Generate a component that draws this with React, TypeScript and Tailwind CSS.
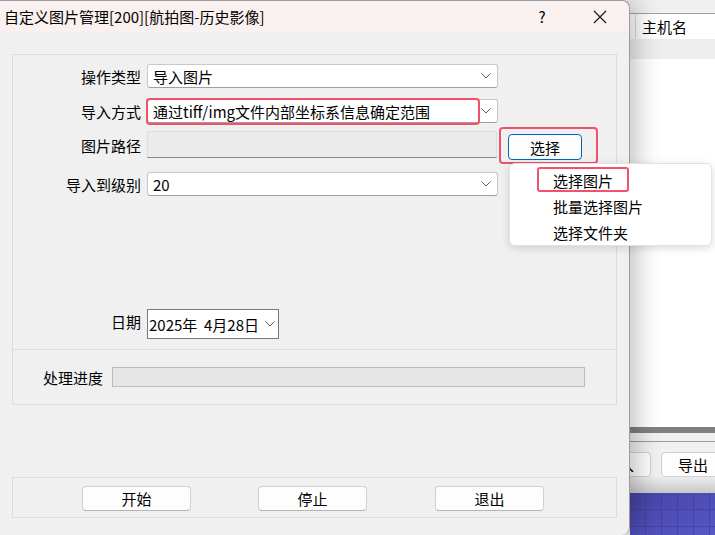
import React from 'react';

// Chevron used by the combo boxes
const Chevron = () => (
  <svg width="10" height="6" viewBox="0 0 10 6" className="shrink-0">
    <path d="M0.5 0.5 L5 5 L9.5 0.5" fill="none" stroke="#606060" strokeWidth="1" />
  </svg>
);

type SelectProps = {
  value: string;
  children?: React.ReactNode;
};

// Windows style combo box
const Select = ({ value, children }: SelectProps) => (
  <div className="relative flex h-[24px] w-[351px] items-center justify-between rounded-[3px] border border-[#c8c8c8] border-b-[#a0a0a0] bg-white pl-[5px] pr-[6px]">
    <span className="leading-none">{value}</span>
    <Chevron />
    {children}
  </div>
);

// Label column of the form
const Label = ({ text, w = 'w-[128px]' }: { text: string; w?: string }) => (
  <div className={`${w} shrink-0 text-right leading-none`}>{text}</div>
);

const Button = ({ text }: { text: string }) => (
  <div className="flex h-[25px] w-[109px] items-center justify-center rounded-[4px] border border-[#d0d0d0] border-b-[#b4b4b4] bg-[#fdfdfd] leading-none">
    {text}
  </div>
);

export default function App() {
  return (
    <div className="relative flex h-[535px] w-[715px] overflow-hidden bg-[#f0f0f0] text-[15px] text-black [font-family:'Noto_Sans_CJK_SC','Noto_Sans',sans-serif]">
      {/* Dialog */}
      <div className="relative z-10 flex h-[535px] w-[630px] shrink-0 flex-col rounded-tr-[8px] rounded-br-[8px] border-r border-t border-[#9c9c9c] bg-[#f0f0f0] shadow-[6px_0_26px_rgba(0,0,0,0.25)]">
        {/* Title bar */}
        <div className="flex h-[31px] items-center justify-between rounded-tr-[8px] bg-[#f8f1ef] pl-[4px] pr-[6px]">
          <span className="leading-none">自定义图片管理[200][航拍图-历史影像]</span>
          <div className="flex items-center">
            <div className="flex w-[46px] justify-center leading-none">?</div>
            <div className="ml-[12px] flex w-[46px] justify-center">
              <svg width="14" height="14" viewBox="0 0 14 14">
                <path d="M1 1 L13 13 M13 1 L1 13" stroke="#1a1a1a" strokeWidth="1.2" />
              </svg>
            </div>
          </div>
        </div>

        {/* Body */}
        <div className="flex flex-1 flex-col px-[12px] pt-[22px]">
          {/* Settings group */}
          <div className="flex flex-col border border-[#dcdcdc] pb-[10px] pt-[9px]">
            <div className="flex items-center gap-[6px]">
              <Label text="操作类型" />
              <Select value="导入图片" />
            </div>

            <div className="mt-[11px] flex items-center gap-[6px]">
              <Label text="导入方式" />
              <Select value="通过tiff/img文件内部坐标系信息确定范围">
                <div className="absolute -left-[2px] -top-[2px] h-[27px] w-[334px] rounded-[4px] border-2 border-[#f0526a]" />
              </Select>
            </div>

            <div className="mt-[8px] flex items-start gap-[6px]">
              <Label text="图片路径" w="w-[128px] mt-[7px]" />
              <div className="h-[27px] w-[350px] border border-[#dedede] border-b-[#858585] bg-[#ebebeb]" />
              <div className="relative ml-[5px] mt-[3px] flex h-[26px] w-[74px] items-center justify-center rounded-[4px] border border-[#0067c0] bg-[#fdfdfd] leading-none">
                选择
                <div className="absolute -left-[10px] -top-[8px] h-[37px] w-[99px] rounded-[4px] border-2 border-[#f0526a]" />
              </div>
            </div>

            <div className="mt-[12px] flex items-center gap-[6px]">
              <Label text="导入到级别" />
              <Select value="20" />
            </div>

            <div className="mt-[113px] flex items-start gap-[6px]">
              <Label text="日期" w="w-[128px] mt-[5px]" />
              <div className="flex h-[30px] w-[132px] items-center justify-between border border-[#7a7a7a] bg-white pl-[1px] pr-[3px]">
                <span className="leading-none">2025年&nbsp;&nbsp;4月28日</span>
                <Chevron />
              </div>
            </div>
          </div>

          {/* Progress group */}
          <div className="flex items-center gap-[9px] border border-t-0 border-[#dcdcdc] py-[17px]">
            <Label text="处理进度" w="w-[90px]" />
            <div className="h-[20px] w-[473px] border border-[#bcbcbc] bg-[#e6e6e6]" />
          </div>

          {/* Action buttons */}
          <div className="mt-[72px] flex border border-[#dcdcdc] pb-[6px] pl-[69px] pt-[8px]">
            <Button text="开始" />
            <div className="ml-[67px]">
              <Button text="停止" />
            </div>
            <div className="ml-[68px]">
              <Button text="退出" />
            </div>
          </div>
        </div>
      </div>

      {/* Window behind the dialog */}
      <div className="flex flex-1 flex-col overflow-hidden">
        <div className="h-[14px] border-b border-[#a0a0a0] bg-[#f0f0f0]" />
        <div className="flex h-[25px] bg-white">
          <div className="ml-[5px] flex items-center border-l border-[#dadada] pl-[6px] leading-none">主机名</div>
        </div>
        <div className="h-[20px] bg-[#eeeeee]" />
        <div className="h-[368px] bg-white" />
        <div className="h-[6px] bg-[#808080]" />
        <div className="h-[8px] bg-[#f0f0f0]" />
        <div className="h-px bg-[#9898a8]" />
        <div className="flex h-[35px] items-center bg-[#f0f0f0] pt-[9px]">
          <div className="-ml-[50px] flex h-[25px] w-[71px] shrink-0 items-center justify-end rounded-[4px] border border-[#d0d0d0] bg-[#fdfdfd] pr-[16px] leading-none">
            导入
          </div>
          <div className="ml-[10px] flex h-[25px] w-[70px] shrink-0 items-center justify-start rounded-[4px] border border-[#d0d0d0] bg-[#fdfdfd] pl-[16px] leading-none">
            导出
          </div>
        </div>
        <div className="h-[16px] bg-gradient-to-b from-[#ececec] to-[#c8c8c8]" />
        <svg className="w-full flex-1" viewBox="0 0 85 42" preserveAspectRatio="none">
          <defs>
            <linearGradient id="blue" x1="0" y1="0" x2="1" y2="1">
              <stop offset="0" stopColor="#4444a6" />
              <stop offset="1" stopColor="#5858c6" />
            </linearGradient>
          </defs>
          <rect width="85" height="42" fill="url(#blue)" />
          <g stroke="#3c3c98" strokeWidth="1" opacity="0.6">
            <path d="M15.5 0 V42 M31.5 0 V42 M47.5 0 V42 M63.5 0 V42 M79.5 0 V42" />
            <path d="M0 16.5 H85 M0 33.5 H85" />
          </g>
        </svg>
      </div>

      {/* Popup menu of the 选择 button */}
      <div className="absolute left-[509px] top-[163px] z-20 flex h-[83px] w-[203px] flex-col rounded-[6px] border border-[#e2e2e2] bg-white pt-[3px] shadow-[0_2px_8px_rgba(0,0,0,0.15)]">
        <div className="relative flex h-[26px] items-center pl-[43px] leading-none">
          选择图片
          <div className="absolute left-[27px] top-0 h-[25px] w-[92px] rounded-[3px] border-2 border-[#f0526a]" />
        </div>
        <div className="flex h-[26px] items-center pl-[43px] leading-none">批量选择图片</div>
        <div className="flex h-[26px] items-center pl-[43px] leading-none">选择文件夹</div>
      </div>
    </div>
  );
}
